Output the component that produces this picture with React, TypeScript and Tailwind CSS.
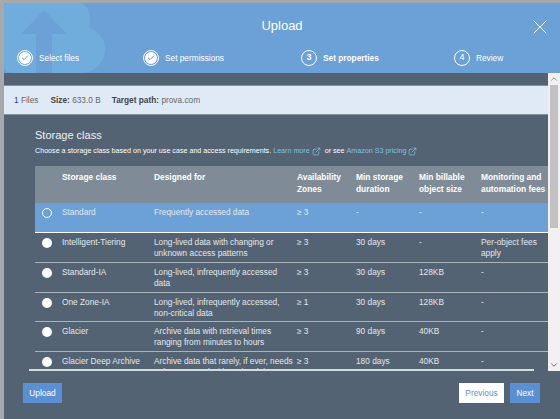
import React from 'react';
import { ChevronDown, ChevronUp, ExternalLink, X, Check } from 'lucide-react';

const rows = [
  { name: 'Standard', desc: ['Frequently accessed data'], az: '≥ 3', dur: '-', size: '-', fees: ['-'], h: 'h-[30px]', selected: true },
  { name: 'Intelligent-Tiering', desc: ['Long-lived data with changing or', 'unknown access patterns'], az: '≥ 3', dur: '30 days', size: '-', fees: ['Per-object fees', 'apply'], h: 'h-[30px]' },
  { name: 'Standard-IA', desc: ['Long-lived, infrequently accessed', 'data'], az: '≥ 3', dur: '30 days', size: '128KB', fees: ['-'], h: 'h-[30px]' },
  { name: 'One Zone-IA', desc: ['Long-lived, infrequently accessed,', 'non-critical data'], az: '≥ 1', dur: '30 days', size: '128KB', fees: ['-'], h: 'h-[29px]' },
  { name: 'Glacier', desc: ['Archive data with retrieval times', 'ranging from minutes to hours'], az: '≥ 3', dur: '90 days', size: '40KB', fees: ['-'], h: 'h-[30px]' },
  { name: 'Glacier Deep Archive', desc: ['Archive data that rarely, if ever, needs', 'to be accessed with retrieval times'], az: '≥ 3', dur: '180 days', size: '40KB', fees: ['-'], h: 'h-[30px]' },
];

const gridCols = 'grid grid-cols-[27px_92px_143px_59px_63px_62px_90px]';

function Step({ n, label, state }: { n: string; label: string; state: 'done' | 'active' | 'todo' }) {
  return (
    <div className="flex items-center gap-[6px]">
      {state === 'done' ? (
        <div className="w-4 h-4 rounded-full border border-white flex items-center justify-center">
          <div className="w-[12px] h-[12px] rounded-full bg-white flex items-center justify-center">
            <Check size={8} strokeWidth={2.5} className="text-[#4d87c7]" />
          </div>
        </div>
      ) : (
        <div className={`w-4 h-4 rounded-full border border-white flex items-center justify-center text-[9px] text-white ${state === 'active' ? 'font-bold' : ''}`}>
          {n}
        </div>
      )}
      <span className={`text-[8.3px] text-white ${state === 'active' ? 'font-bold' : ''}`}>{label}</span>
    </div>
  );
}

export default function App() {
  return (
    <div className="w-[560px] h-[419px] overflow-hidden bg-[#a6a9ab] pl-[4px] pt-[3px] font-['Liberation_Sans',Arial,sans-serif]">
      <div className="w-[556px] h-[416px] flex flex-col rounded-tl-[3px] overflow-hidden bg-[#546373]">
        <header className="relative h-[70px] shrink-0 bg-[#6ba1d6] overflow-hidden">
          <svg className="absolute left-0 top-0" width="106" height="70" viewBox="0 0 106 70">
            <path d="M0 0H76C84 1 88 12 85 25C96 28 102 38 101 48C100 60 90 70 78 70H8C3 70 0 67 0 62Z" fill="#70acdc" />
            <path d="M40 7L63 31H48V70H32V31H17Z" fill="#6ba1d6" />
          </svg>
          <div className="relative h-[46px] flex items-center justify-center text-white text-[13px]">Upload</div>
          <X size={24} strokeWidth={1} className="absolute right-[8px] top-[12px] text-white" />
          <div className="absolute left-[13px] top-[47px] flex">
            <div className="w-[126px]"><Step n="1" label="Select files" state="done" /></div>
            <div className="w-[158px]"><Step n="2" label="Set permissions" state="done" /></div>
            <div className="w-[153px]"><Step n="3" label="Set properties" state="active" /></div>
            <Step n="4" label="Review" state="todo" />
          </div>
        </header>

        <div className="flex h-[298px] shrink-0">
          <div className="w-[544px] overflow-hidden">
            <div className="h-[12px]" />
            <div className="h-[30px] bg-[#dfeaf6] border-y border-[#7f8f9d] flex items-center pl-[10px] text-[8.3px] text-[#666] gap-[12px]">
              <span><span className="text-[#3b3b7a]">1</span> Files</span>
              <span><b className="text-[#444]">Size:</b> 633.0 B</span>
              <span className="-ml-[1px]"><b className="text-[#444]">Target path:</b> prova.com</span>
            </div>
            <div className="pl-[31px] pt-[13px]">
              <h2 className="text-[11px] text-[#eef1f4] leading-[14px]">Storage class</h2>
              <p className="text-[7.15px] text-white leading-[10px] mt-[4px] flex items-center whitespace-nowrap">
                Choose a storage class based on your use case and access requirements.&nbsp;
                <span className="text-[#7cc0e8]">Learn more</span>
                <ExternalLink size={9} className="text-[#7cc0e8] mx-[2px]" />
                &nbsp;or see&nbsp;
                <span className="text-[#7cc0e8]">Amazon S3 pricing</span>
                <ExternalLink size={9} className="text-[#7cc0e8] mx-[2px]" />
              </p>
              <div className={`${gridCols} mt-[10px] w-[536px] h-[37px] bg-[#7f8c98] text-[8.4px] font-bold text-white leading-[12px] pt-[5px]`}>
                <div />
                <div>Storage class</div>
                <div>Designed for</div>
                <div>Availability<br />Zones</div>
                <div>Min storage<br />duration</div>
                <div>Min billable<br />object size</div>
                <div className="whitespace-nowrap">Monitoring and<br />automation fees</div>
              </div>
              <div className="w-[536px]">
                {rows.map((r) => (
                  <div
                    key={r.name}
                    className={`${gridCols} ${r.h} pt-[4px] text-[8.3px] leading-[11px] text-[#e4e8ec] border-b border-[#a9b3bc] ${r.selected ? 'bg-[#6ba1d6] border-white' : ''}`}
                  >
                    <div className="pl-[7px]">
                      <div className={`w-[10px] h-[10px] mt-[1px] rounded-full ${r.selected ? 'border border-white' : 'bg-white'}`} />
                    </div>
                    <div className="whitespace-nowrap">{r.name}</div>
                    <div className="whitespace-nowrap">{r.desc.map((d) => <div key={d}>{d}</div>)}</div>
                    <div>{r.az}</div>
                    <div>{r.dur}</div>
                    <div>{r.size}</div>
                    <div className="whitespace-nowrap">{r.fees.map((d) => <div key={d}>{d}</div>)}</div>
                  </div>
                ))}
              </div>
            </div>
          </div>
          <div className="w-[12px] bg-[#f1f1f1] flex flex-col items-center">
            <ChevronUp size={10} className="text-[#777] my-[1px]" />
            <div className="w-[8px] h-[143px] bg-[#c1c1c1]" />
            <div className="flex-1" />
            <ChevronDown size={10} className="text-[#555] my-[1px]" />
          </div>
        </div>

        <footer className="relative flex-1 flex items-start justify-between pl-[19px] pr-[20px] pt-[12px]">
          <div className="absolute left-[25px] -top-[2px] w-[505px] h-[2px] bg-[#d7dadd]" />
          <button className="w-[39px] h-[20px] bg-[#5a90d2] text-white text-[8.3px]">Upload</button>
          <div className="flex gap-[6px]">
            <button className="w-[45px] h-[20px] bg-white text-[#5a90d2] text-[8.3px]">Previous</button>
            <button className="w-[30px] h-[20px] bg-[#5a90d2] text-white text-[8.3px]">Next</button>
          </div>
        </footer>
      </div>
    </div>
  );
}
